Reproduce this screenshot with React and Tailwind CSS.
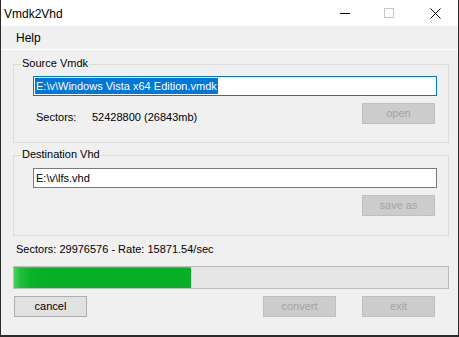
export default function App() {
  const sans = { fontFamily: '"Liberation Sans", Arial, sans-serif' };
  return (
    <div className="w-[459px] h-[337px] bg-[#2b2b2b] flex flex-col" style={sans}>
      <div className="ml-[1px] mr-[1px] w-[457px] h-[335px] bg-[#f0f0f0] flex flex-col">
        {/* title bar */}
        <div className="h-[26px] bg-white flex items-center">
          <span className="ml-[3px] text-[12px] leading-[14px] text-black mt-[1px]">Vmdk2Vhd</span>
          <div className="ml-auto flex h-full">
            <div className="w-[46px] flex items-center justify-center">
              <svg width="10" height="10" viewBox="0 0 10 10" className="ml-[4px]"><line x1="0" y1="5.5" x2="10" y2="5.5" stroke="#000" strokeWidth="1" /></svg>
            </div>
            <div className="w-[46px] flex items-center justify-center">
              <svg width="10" height="10" viewBox="0 0 10 10"><rect x="0.5" y="0.5" width="9" height="9" fill="none" stroke="#c6c6c6" strokeWidth="1" /></svg>
            </div>
            <div className="w-[46px] flex items-center justify-center">
              <svg width="11" height="11" viewBox="0 0 11 11" className="ml-[1px]"><path d="M0.5 0.5 L10.5 10.5 M10.5 0.5 L0.5 10.5" stroke="#000" strokeWidth="1" /></svg>
            </div>
          </div>
        </div>
        {/* menu */}
        <div className="h-[23px] bg-[#f0f0f0] flex items-center">
          <span className="ml-[15px] text-[12px] leading-[14px] text-black">Help</span>
        </div>
        <div className="h-[1px] bg-white" />
        {/* content */}
        <div className="flex flex-col text-[11px] leading-[13px] text-black">
          {/* Source group */}
          <div className="relative ml-[12px] mt-[14px] w-[436px] border border-[#dcdcdc] pt-[11px] pl-[19px] pb-[18px]">
            <span className="absolute left-[7px] top-[-8px] px-[1px] bg-[#f0f0f0]">Source Vmdk</span>
            <div className="w-[404px] h-[20px] border border-[#0078d7] bg-white flex items-center">
              <span className="ml-[1px] bg-[#0078d7] text-white h-[16px] leading-[16px] px-[1px]">E:\v\Windows Vista x64 Edition.vmdk</span>
            </div>
            <div className="w-[404px] mt-[7px] flex items-start">
              <span className="ml-[3px] mt-[8px] w-[56px]">Sectors:</span>
              <span className="mt-[8px]">52428800 (26843mb)</span>
              <div className="ml-auto mr-[2px] w-[73px] h-[21px] bg-[#cccccc] border border-[#bfbfbf] text-[#a3a3a3] flex items-center justify-center">open</div>
            </div>
          </div>
          {/* Destination group */}
          <div className="relative ml-[12px] mt-[12px] w-[436px] border border-[#dcdcdc] pt-[12px] pl-[19px] pb-[19px]">
            <span className="absolute left-[7px] top-[-8px] px-[1px] bg-[#f0f0f0]">Destination Vhd</span>
            <div className="w-[404px] h-[20px] border border-[#7a7a7a] bg-white flex items-center">
              <span className="ml-[2px]">E:\v\lfs.vhd</span>
            </div>
            <div className="w-[404px] mt-[7px] flex">
              <div className="ml-auto mr-[2px] w-[73px] h-[21px] bg-[#cccccc] border border-[#bfbfbf] text-[#a3a3a3] flex items-center justify-center">save as</div>
            </div>
          </div>
          {/* status */}
          <div className="ml-[15px] mt-[7px]">Sectors: 29976576 - Rate: 15871.54/sec</div>
          {/* progress */}
          <div className="ml-[12px] mt-[10px] w-[436px] h-[23px] border border-[#bcbcbc] bg-[#e6e6e6] flex">
            <div className="w-[177px] h-full bg-[linear-gradient(90deg,#4cd060_0px,#22c03c_6px,#0bb32a_16px,#06b025_30px)] relative">
              <div className="absolute left-0 top-0 w-full h-[1px] bg-[#3cc851]" />
            </div>
          </div>
          {/* buttons */}
          <div className="mt-[7px] flex">
            <div className="ml-[13px] w-[73px] h-[21px] bg-[#e1e1e1] border border-[#adadad] text-black flex items-center justify-center">cancel</div>
            <div className="ml-[176px] w-[73px] h-[21px] bg-[#cccccc] border border-[#bfbfbf] text-[#a3a3a3] flex items-center justify-center">convert</div>
            <div className="ml-[26px] w-[73px] h-[21px] bg-[#cccccc] border border-[#bfbfbf] text-[#a3a3a3] flex items-center justify-center">exit</div>
          </div>
        </div>
      </div>
    </div>
  );
}
